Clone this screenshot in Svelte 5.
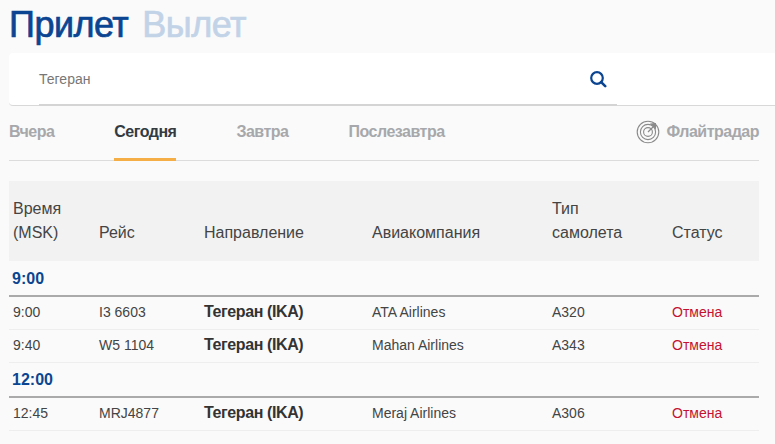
<script>
  const tabs = [
    { label: 'Вчера' },
    { label: 'Сегодня', active: true },
    { label: 'Завтра' },
    { label: 'Послезавтра' }
  ];

  const groups = [
    {
      hour: '9:00',
      flights: [
        { time: '9:00', no: 'I3 6603', airline: 'ATA Airlines', plane: 'A320' },
        { time: '9:40', no: 'W5 1104', airline: 'Mahan Airlines', plane: 'A343' }
      ]
    },
    {
      hour: '12:00',
      flights: [{ time: '12:45', no: 'MRJ4877', airline: 'Meraj Airlines', plane: 'A306' }]
    }
  ];
</script>

<main class="page">
  <h1 class="title">
    <span class="current">Прилет</span>
    <span class="other">Вылет</span>
  </h1>

  <div class="search">
    <div class="field">
      <span class="query">Тегеран</span>
      <svg class="search-icon" width="18" height="18" viewBox="0 0 18 18" aria-hidden="true">
        <circle cx="8" cy="8" r="5.8" fill="none" stroke="#0b4591" stroke-width="2.2" />
        <path d="M12.2 12.2 L16.2 16.2" stroke="#0b4591" stroke-width="2.6" stroke-linecap="round" />
      </svg>
    </div>
  </div>

  <nav class="tabs">
    {#each tabs as tab}
      <span class="tab" class:active={tab.active}>{tab.label}</span>
    {/each}
    <span class="radar">
      <svg width="24" height="24" viewBox="0 0 24 24" aria-hidden="true">
        <g fill="none" stroke="#8a8a8a">
          <circle cx="12" cy="12" r="10.8" stroke-width="1.1" />
          <circle cx="12" cy="12" r="7.6" stroke-width="1.1" />
          <circle cx="12" cy="12" r="4.4" stroke-width="1.1" />
        </g>
        <path d="M14 3.5 L20 3 L20 9.5 Z" fill="#8a8a8a" />
        <path d="M12 12 L17.5 6.5" stroke="#8a8a8a" stroke-width="1.2" />
      </svg>
      Флайтрадар
    </span>
  </nav>

  <table class="board">
    <colgroup>
      <col style="width: 86px" />
      <col style="width: 105px" />
      <col style="width: 168px" />
      <col style="width: 180px" />
      <col style="width: 120px" />
      <col style="width: 91px" />
    </colgroup>
    <thead>
      <tr>
        <th>Время<br />(MSK)</th>
        <th>Рейс</th>
        <th>Направление</th>
        <th>Авиакомпания</th>
        <th>Тип<br />самолета</th>
        <th>Статус</th>
      </tr>
    </thead>
    <tbody>
      {#each groups as group}
        <tr class="hour">
          <td colspan="6">{group.hour}</td>
        </tr>
        {#each group.flights as flight}
          <tr class="flight">
            <td>{flight.time}</td>
            <td>{flight.no}</td>
            <td class="dest">Тегеран (IKA)</td>
            <td>{flight.airline}</td>
            <td>{flight.plane}</td>
            <td class="status">Отмена</td>
          </tr>
        {/each}
      {/each}
    </tbody>
  </table>
</main>

<style>
  :global(body) {
    background: #fafafa;
    overflow: hidden;
  }

  .page {
    font-family: "Liberation Sans", Arial, sans-serif;
    color: #333;
    height: 444px;
    overflow: hidden;
  }

  .title {
    margin: 0;
    padding-left: 9px;
    height: 53px;
    font-size: 36px;
    line-height: 50px;
    font-weight: 400;
    letter-spacing: -0.5px;
    display: flex;
    gap: 14px;
    -webkit-text-stroke: 0.7px currentColor;
  }

  .current {
    color: #0b4591;
  }

  .other {
    color: #c2d3e8;
  }

  .search {
    margin-left: 9px;
    height: 53px;
    background: #fff;
    border-bottom: 1px solid #d8d8d8;
    border-radius: 4px 0 0 4px;
    box-sizing: border-box;
    padding-left: 30px;
  }

  .field {
    width: 578px;
    height: 53px;
    box-sizing: border-box;
    border-bottom: 2px solid #d4d4d4;
    display: flex;
    align-items: center;
    justify-content: space-between;
    padding-right: 10px;
  }

  .query {
    font-size: 14px;
    color: #777;
  }

  .search-icon {
    margin-top: 1px;
  }

  .tabs {
    margin: 0 16px 0 9px;
    height: 55px;
    box-sizing: border-box;
    border-bottom: 1px solid #dcdcdc;
    display: flex;
    align-items: stretch;
    font-size: 16px;
    font-weight: 700;
    color: #a6a8ab;
    letter-spacing: -0.5px;
  }

  .tab {
    margin-right: 60px;
    padding-top: 17px;
    box-sizing: border-box;
  }

  .tab.active {
    color: #333a42;
    border-bottom: 3px solid #f5ae45;
    margin-bottom: -1px;
  }

  .radar {
    margin-left: auto;
    display: flex;
    align-items: center;
    gap: 7px;
    height: 54px;
    margin-top: -1px;
  }

  .board {
    margin: 20px 0 0 9px;
    width: 750px;
    table-layout: fixed;
    border-collapse: collapse;
  }

  th {
    background: #f2f2f2;
    height: 80px;
    box-sizing: border-box;
    padding: 0 0 16px 4px;
    vertical-align: bottom;
    text-align: left;
    font-size: 16px;
    line-height: 24px;
    font-weight: 400;
    color: #444;
  }

  .hour td {
    height: 35px;
    padding: 2px 0 0 3px;
    font-size: 16px;
    font-weight: 700;
    color: #0b4591;
    border-bottom: 2px solid #aaa;
    box-sizing: border-box;
  }

  .flight td {
    height: 33px;
    padding: 0 0 2px 4px;
    font-size: 14px;
    color: #444;
    border-bottom: 1px solid #eee;
    box-sizing: border-box;
  }

  .flight td.dest {
    font-size: 16px;
    font-weight: 700;
    letter-spacing: -0.4px;
    color: #333;
  }

  .flight td.status {
    color: #c4122f;
  }
</style>
